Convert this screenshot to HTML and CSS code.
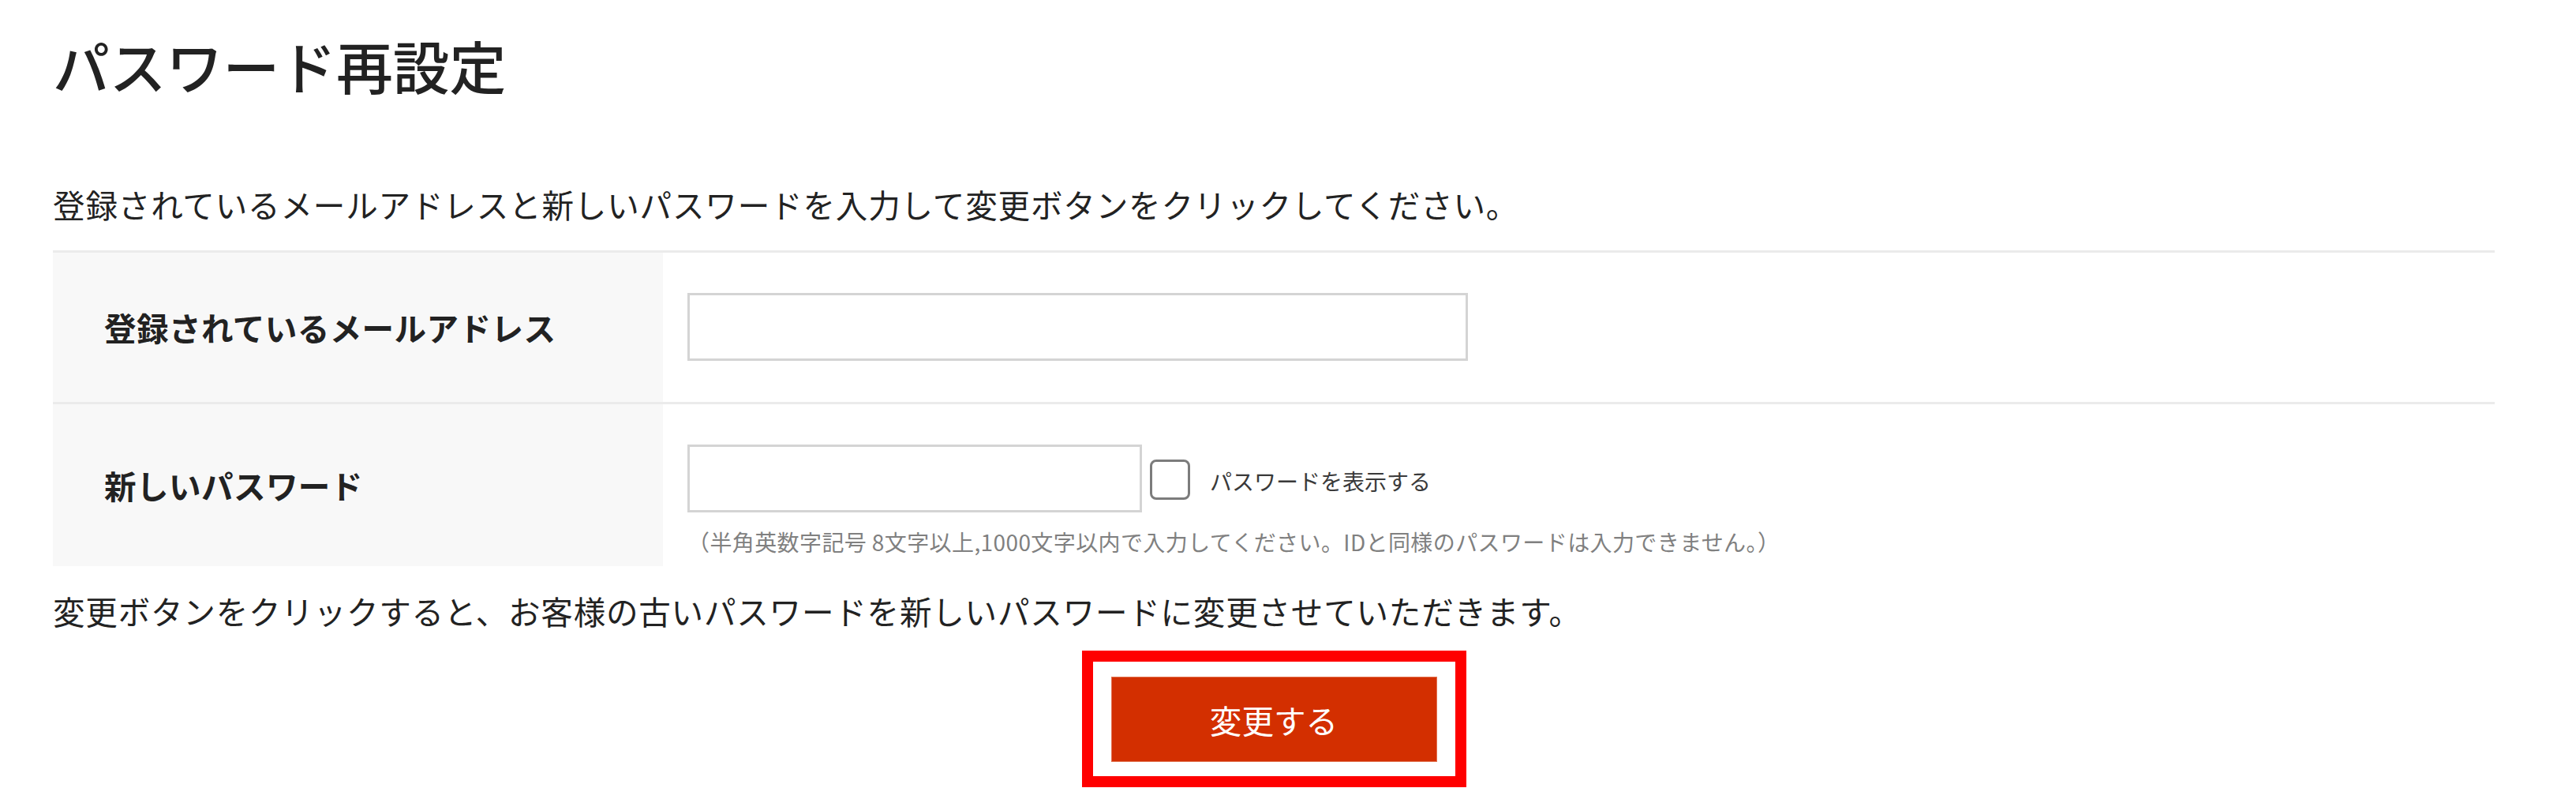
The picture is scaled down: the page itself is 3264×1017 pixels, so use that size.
FILE: index.html
```html
<!DOCTYPE html>
<html lang="ja">
<head>
<meta charset="utf-8">
<title>パスワード再設定</title>
<link rel="stylesheet" href="styles.css">
</head>
<body>
<main class="page">
  <h1 class="title">パスワード再設定</h1>
  <p class="intro">登録されているメールアドレスと新しいパスワードを入力して変更ボタンをクリックしてください。</p>
  <div class="form-table">
    <div class="row row-email">
      <div class="label">登録されているメールアドレス</div>
      <div class="value">
        <input class="text-input email-input" type="email">
      </div>
    </div>
    <div class="row row-pass">
      <div class="label">新しいパスワード</div>
      <div class="value value-pass">
        <div class="pass-line">
          <input class="text-input pass-input" type="password">
          <label class="show-pass"><input class="checkbox" type="checkbox"><span class="show-text">パスワードを表示する</span></label>
        </div>
        <p class="hint">（半角英数字記号 8文字以上,1000文字以内で入力してください。IDと同様のパスワードは入力できません。）</p>
      </div>
    </div>
  </div>
  <p class="notice">変更ボタンをクリックすると、お客様の古いパスワードを新しいパスワードに変更させていただきます。</p>
  <div class="submit-wrap">
    <button class="submit" type="button">変更する</button>
  </div>
</main>
</body>
</html>
```

FILE: styles.css
```css
html, body {
  margin: 0;
  padding: 0;
  background: #ffffff;
}

body {
  font-family: "Noto Sans CJK JP", "Noto Sans", sans-serif;
  color: #222222;
}

.page {
  margin-left: 67px;
  width: 3094px;
  padding-top: 32px;
}

.title {
  margin: 0;
  font-size: 71.8px;
  line-height: 100px;
  font-weight: 500;
  color: #222222;
}

.intro {
  margin: 97px 0 0 0;
  font-size: 40.6px;
  line-height: 60px;
  letter-spacing: 0.8px;
  color: #222222;
}

.form-table {
  margin-top: 28px;
}

.row {
  display: flex;
  border-top: 3px solid #ebebeb;
}

.label {
  width: 773px;
  flex: none;
  box-sizing: border-box;
  padding-left: 65px;
  background: #f8f8f8;
  display: flex;
  align-items: center;
  font-size: 40.6px;
  font-weight: 700;
  letter-spacing: 0.4px;
  color: #222222;
}

.value {
  flex: 1;
  padding: 51px 31px 52px 31px;
}

.value-pass {
  padding-bottom: 11px;
}

.text-input {
  display: block;
  box-sizing: border-box;
  height: 86px;
  margin: 0;
  border: 3px solid #d4d4d4;
  background: #ffffff;
  border-radius: 0;
  outline: none;
}

.email-input {
  width: 989px;
}

.pass-line {
  display: flex;
  align-items: center;
}

.pass-input {
  width: 576px;
  flex: none;
}

.show-pass {
  display: flex;
  align-items: center;
  margin-left: 10px;
}

.checkbox {
  -webkit-appearance: none;
  appearance: none;
  box-sizing: border-box;
  width: 51px;
  height: 51px;
  margin: 2px 0 0 0;
  border: 3px solid #7c7c7c;
  border-radius: 8px;
  background: #ffffff;
}

.show-text {
  margin-left: 25px;
  font-size: 28px;
  line-height: 40px;
  color: #3a3a3a;
  padding-top: 6px;
}

.hint {
  margin: 17px 0 0 0;
  font-size: 28px;
  line-height: 40px;
  letter-spacing: 0.4px;
  color: #808080;
}

.notice {
  margin: 27px 0 0 0;
  font-size: 40.6px;
  line-height: 60px;
  letter-spacing: 0.75px;
  color: #222222;
}

.submit-wrap {
  width: max-content;
  margin: 20px auto 0 auto;
  border: 14px solid #ff0000;
  padding: 19px 23px 18px 23px;
}

.submit {
  display: flex;
  align-items: center;
  justify-content: center;
  width: 413px;
  height: 108px;
  margin: 0;
  border: 1px solid #e2724f;
  background: #d32f00;
  color: #ffffff;
  font-family: "Noto Sans CJK JP", "Noto Sans", sans-serif;
  font-size: 40.6px;
  font-weight: 400;
  cursor: pointer;
}
```
